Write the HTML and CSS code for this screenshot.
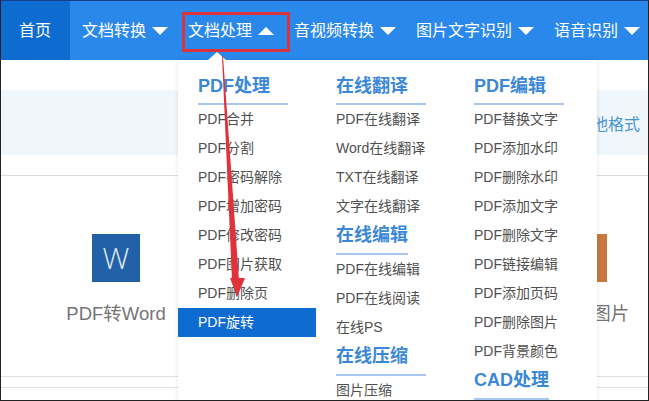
FILE: index.html
```html
<!DOCTYPE html>
<html lang="zh">
<head>
<meta charset="utf-8">
<title>文档处理</title>
<link rel="stylesheet" href="styles.css">
</head>
<body>
<div class="frame">
  <nav class="nav">
    <a class="nav-home">首页</a>
    <a class="nav-item">文档转换<i class="caret"></i></a>
    <a class="nav-item">文档处理<i class="caret caret-up"></i></a>
    <a class="nav-item">音视频转换<i class="caret"></i></a>
    <a class="nav-item">图片文字识别<i class="caret"></i></a>
    <a class="nav-item">语音识别<i class="caret"></i></a>
  </nav>
  <main class="page">
    <section class="intro">
      <div class="band"><span class="band-text">支持其他格式</span></div>
    </section>
    <section class="cards">
      <div class="card"><div class="tile tile-word">W</div><div class="card-label">PDF转Word</div></div>
      <div class="card"><div class="tile tile-img"></div><div class="card-label">PDF转图片</div></div>
    </section>
    <div class="rules"></div>
  </main>
  <div class="menu">
    <div class="menu-col">
      <h3 class="menu-head">PDF处理</h3>
      <a class="menu-link">PDF合并</a>
      <a class="menu-link">PDF分割</a>
      <a class="menu-link">PDF密码解除</a>
      <a class="menu-link">PDF增加密码</a>
      <a class="menu-link">PDF修改密码</a>
      <a class="menu-link">PDF图片获取</a>
      <a class="menu-link">PDF删除页</a>
      <a class="menu-link menu-link-active">PDF旋转</a>
    </div>
    <div class="menu-col">
      <h3 class="menu-head">在线翻译</h3>
      <a class="menu-link">PDF在线翻译</a>
      <a class="menu-link">Word在线翻译</a>
      <a class="menu-link">TXT在线翻译</a>
      <a class="menu-link">文字在线翻译</a>
      <h3 class="menu-head menu-head-short">在线编辑</h3>
      <a class="menu-link">PDF在线编辑</a>
      <a class="menu-link">PDF在线阅读</a>
      <a class="menu-link">在线PS</a>
      <h3 class="menu-head">在线压缩</h3>
      <a class="menu-link">图片压缩</a>
    </div>
    <div class="menu-col">
      <h3 class="menu-head">PDF编辑</h3>
      <a class="menu-link">PDF替换文字</a>
      <a class="menu-link">PDF添加水印</a>
      <a class="menu-link">PDF删除水印</a>
      <a class="menu-link">PDF添加文字</a>
      <a class="menu-link">PDF删除文字</a>
      <a class="menu-link">PDF链接编辑</a>
      <a class="menu-link">PDF添加页码</a>
      <a class="menu-link">PDF删除图片</a>
      <a class="menu-link">PDF背景颜色</a>
      <h3 class="menu-head menu-head-short">CAD处理</h3>
    </div>
  </div>
  <div class="highlight"></div>
  <svg class="arrow" width="60" height="260" viewBox="0 0 60 260" aria-hidden="true">
    <path d="M11 5 L12 5 L28 229 L21 229 Z" fill="#e0323a"/>
    <path d="M19 227 L34 227 L26 246 Z" fill="#e0323a"/>
  </svg>
</div>
</body>
</html>
```
FILE: styles.css
```css
* { box-sizing: border-box; }
html, body { margin: 0; padding: 0; }
body {
  width: 649px;
  height: 401px;
  overflow: hidden;
  background: #fff;
  font-family: "Liberation Sans", "Noto Sans CJK SC", sans-serif;
}
.frame {
  position: relative;
  width: 649px;
  height: 401px;
  overflow: hidden;
  border-left: 1px solid #222;
  border-right: 1px solid #222;
  border-bottom: 1px solid #222;
  border-top: 1px solid #123f86;
}
.nav {
  display: flex;
  height: 59px;
  background: #2a88ea;
  color: #fff;
  font-size: 16px;
  line-height: 59px;
}
.nav-home {
  flex: none;
  width: 69px;
  padding-left: 18px;
  background: #0e6cd0;
}
.nav-item {
  flex: none;
  display: flex;
  align-items: center;
  padding: 0 8px 0 12px;
  white-space: nowrap;
}
.caret {
  width: 0;
  height: 0;
  margin-left: 6px;
  border-left: 8px solid transparent;
  border-right: 8px solid transparent;
  border-top: 8px solid #fff;
}
.caret-up {
  border-top: 0;
  border-bottom: 8px solid #fff;
}
.page { position: relative; }
.intro {
  height: 116px;
  padding-top: 30px;
  border-bottom: 1px solid #dcdcdc;
}
.band {
  display: flex;
  justify-content: flex-end;
  align-items: center;
  height: 65px;
  padding-right: 8px;
  background: #eff6fc;
}
.band-text {
  font-size: 16px;
  color: #4a94d0;
}
.cards {
  display: flex;
  justify-content: space-between;
  padding: 58px 15px 0 65px;
}
.card {
  display: flex;
  flex-direction: column;
  align-items: center;
  width: 100px;
}
.tile {
  width: 48px;
  height: 48px;
  color: #dfeaf6;
  font-family: "Open Sans", sans-serif;
  font-size: 30px;
  font-weight: 300;
  line-height: 48px;
  text-align: center;
}
.tile-word { background: #2260a8; }
.tile-img { background: #c87a3e; }
.card-label {
  margin-top: 20px;
  color: #757575;
  font-size: 18.5px;
  line-height: 24px;
  white-space: nowrap;
}
.rules {
  height: 12px;
  margin-top: 50px;
  border-top: 1px solid #e0e0e0;
  border-bottom: 1px solid #e0e0e0;
}
.menu {
  position: absolute;
  left: 177px;
  top: 59px;
  display: flex;
  width: 419px;
  height: 341px;
  padding-top: 12px;
  background: #fff;
  box-shadow: 0 0 4px rgba(0, 0, 0, 0.12);
}
.menu::before {
  content: "";
  position: absolute;
  left: 30px;
  top: -8px;
  border-left: 9px solid transparent;
  border-right: 9px solid transparent;
  border-bottom: 8px solid #fff;
}
.menu-col { width: 138px; }
.menu-head {
  width: 90px;
  height: 33px;
  margin: 0 0 0 20px;
  border-bottom: 2px solid #a9c6ec;
  color: #3a88d6;
  font-size: 18px;
  font-weight: 700;
  line-height: 29px;
  white-space: nowrap;
}
.menu-link + .menu-head { height: 34px; }
.menu-head-short { width: fit-content; }
.menu-link {
  display: block;
  height: 29px;
  padding-left: 20px;
  color: #505050;
  font-size: 14px;
  line-height: 29px;
  white-space: nowrap;
}
.menu-link-active {
  background: #0e6cd0;
  color: #fff;
}
.highlight {
  position: absolute;
  left: 181px;
  top: 11px;
  width: 108px;
  height: 40px;
  border: 3px solid #d8333f;
}
.arrow {
  position: absolute;
  left: 210px;
  top: 50px;
}
```
